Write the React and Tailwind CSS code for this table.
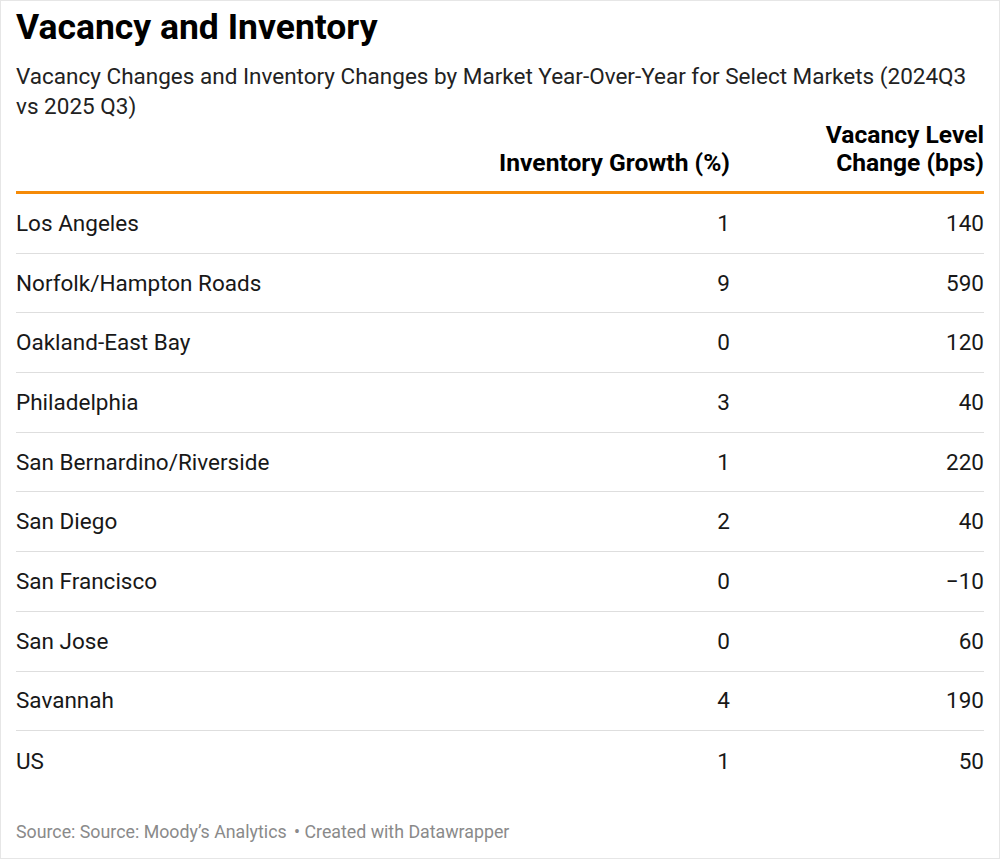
const rows = [
  ['Los Angeles', '1', '140'],
  ['Norfolk/Hampton Roads', '9', '590'],
  ['Oakland-East Bay', '0', '120'],
  ['Philadelphia', '3', '40'],
  ['San Bernardino/Riverside', '1', '220'],
  ['San Diego', '2', '40'],
  ['San Francisco', '0', '\u221210'],
  ['San Jose', '0', '60'],
  ['Savannah', '4', '190'],
  ['US', '1', '50'],
]

function App() {
  return (
    <div className="w-[1000px] h-[859px] bg-white border border-[#e6e6e6] font-['Roboto',sans-serif] text-[#181818] px-[15px]">
      <h1 className="pt-[6px] text-[35.5px] leading-[40px] font-bold text-black">Vacancy and Inventory</h1>
      <p className="mt-[14px] text-[22.5px] leading-[30px] text-[#222]">
        Vacancy Changes and Inventory Changes by Market Year-Over-Year for Select Markets (2024Q3 vs 2025 Q3)
      </p>
      <div>
        <div className="flex items-end pb-[14px] border-b-[3px] border-[#f58a07] text-[24.6px] leading-[28px] font-bold text-black">
          <div className="flex-1"></div>
          <div className="w-[300px] text-right">Inventory Growth (%)</div>
          <div className="w-[254px] text-right">Vacancy Level<br />Change (bps)</div>
        </div>
        {rows.map((r, i) => (
          <div
            key={r[0]}
            className={'flex items-center pt-[1px] h-[59.7px] text-[22.5px] ' + (i < rows.length - 1 ? 'border-b border-[#dedede]' : '')}
          >
            <div className="flex-1">{r[0]}</div>
            <div className="w-[300px] text-right">{r[1]}</div>
            <div className="w-[254px] text-right">{r[2]}</div>
          </div>
        ))}
      </div>
      <div className="mt-[29px] text-[17.8px] leading-[24px] text-[#8a8a8a]">
        Source: Source: Moody’s Analytics <span className="ml-[3px]">• Created with Datawrapper</span>
      </div>
    </div>
  )
}

export default App
